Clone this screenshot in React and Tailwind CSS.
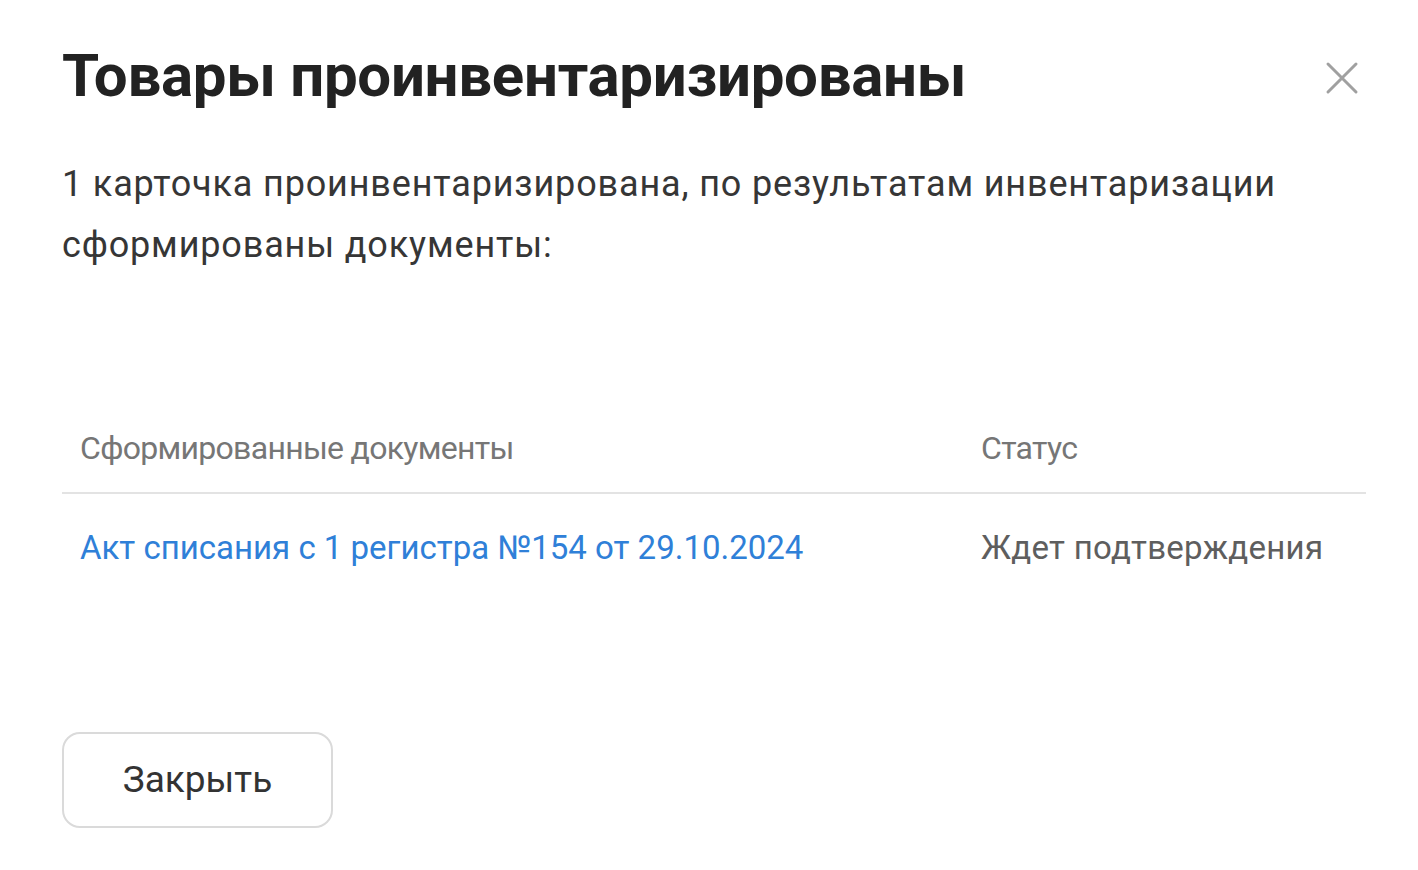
import React from "react";

const App = () => {
  return (
    <div className="min-h-screen w-full bg-white font-['Roboto',sans-serif]">
      <div className="pl-[62px] pr-[52px] pt-[40px]">
        {/* Header */}
        <div className="flex items-start justify-between">
          <h1 className="text-[60px] leading-[72px] font-bold text-[#222222] tracking-[-0.3px]">
            Товары проинвентаризированы
          </h1>
          <button className="mt-[21px] mr-[7px] text-[#a0a0a0]">
            <svg width="34" height="34" viewBox="0 0 34 34" fill="none">
              <path d="M3 3L31 31M31 3L3 31" stroke="currentColor" strokeWidth="3" strokeLinecap="round" />
            </svg>
          </button>
        </div>

        {/* Description */}
        <p className="mt-[42px] text-[36px] leading-[61px] text-[#363636] tracking-[0.85px] pr-[60px]">
          1 карточка проинвентаризирована, по результатам инвентаризации сформированы документы:
        </p>

        {/* Table */}
        <div className="mt-[150px]">
          <div className="grid grid-cols-[919px_1fr] border-b-2 border-[#e3e3e3] pb-[22px]">
            <div className="pl-[18px] text-[32px] leading-[44px] text-[#767676] tracking-[-0.7px]">
              Сформированные документы
            </div>
            <div className="text-[32px] leading-[44px] text-[#767676] tracking-[-0.7px]">Статус</div>
          </div>
          <div className="grid grid-cols-[919px_1fr] pt-[30px]">
            <a href="#" className="pl-[18px] text-[33px] leading-[48px] text-[#2f80d8]">
              Акт списания с 1 регистра №154 от 29.10.2024
            </a>
            <div className="text-[33px] leading-[48px] text-[#5e5e5e] tracking-[0.3px]">Ждет подтверждения</div>
          </div>
        </div>

        {/* Footer */}
        <div className="mt-[160px]">
          <button className="w-[271px] h-[96px] rounded-[18px] border-2 border-[#dadada] bg-white text-[37px] text-[#333333]">
            Закрыть
          </button>
        </div>
      </div>
    </div>
  );
};

export default App;
